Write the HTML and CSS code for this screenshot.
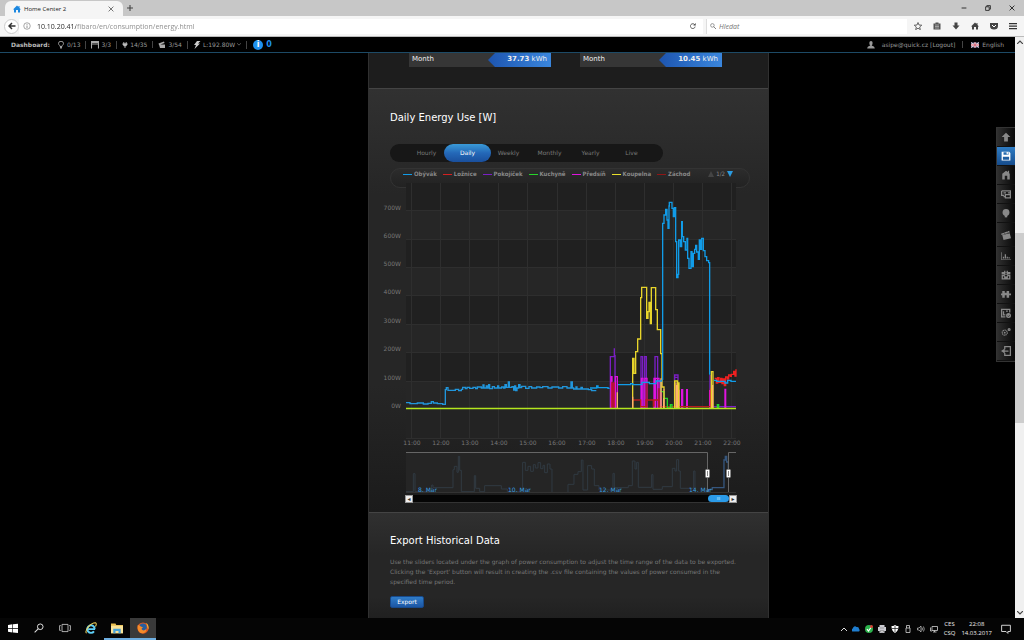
FILE: index.html
```
<!DOCTYPE html>
<html lang="en">

<head>
    <meta charset="UTF-8">
    <meta name="viewport" content="width=device-width, initial-scale=1.0">
    <title>Home Center 2</title>
    <link rel="stylesheet" href="styles.css">
</head>

<body>
    <header class="browser">
        <div class="tab-strip">
            <div class="tab">
                <svg class="icon" viewBox="0 0 16 16"><path fill="#1b87e0" d="M8 1 0 9h2v6h4v-5h4v5h4V9h2l-3-3V2h-2v2z"/></svg>
                <span class="tab-title">Home Center 2</span>
                <button class="plain" aria-label="Close tab"><svg class="icon-s" viewBox="0 0 10 10"><path d="m1 1 8 8M9 1 1 9" stroke="#666" stroke-width="1.5"/></svg></button>
            </div>
            <button class="plain new-tab" aria-label="New tab"><svg class="icon-s" viewBox="0 0 10 10"><path d="M5 0v10M0 5h10" stroke="#444" stroke-width="1.8"/></svg></button>
            <div class="window-buttons">
                <button class="plain" aria-label="Minimize"><svg class="icon-s" viewBox="0 0 10 10"><path d="M1 5h8" stroke="#222" stroke-width="1.5"/></svg></button>
                <button class="plain" aria-label="Restore"><svg class="icon-s" viewBox="0 0 10 10"><path d="M1 3h6v6H1zM3 3V1h6v6H7" fill="none" stroke="#222" stroke-width="1.4"/></svg></button>
                <button class="plain" aria-label="Close"><svg class="icon-s" viewBox="0 0 10 10"><path d="m1 1 8 8M9 1 1 9" stroke="#222" stroke-width="1.5"/></svg></button>
            </div>
        </div>
        <div class="nav-bar">
            <button class="plain back" aria-label="Back"><svg class="icon" viewBox="0 0 16 16"><path d="M15 8H3m5-6L2 8l6 6" fill="none" stroke="#333" stroke-width="3"/></svg></button>
            <div class="address">
                <svg class="icon" viewBox="0 0 16 16"><circle cx="8" cy="8" r="6.5" fill="none" stroke="#777" stroke-width="1.3"/><path d="M8 7v5M8 4v1.6" stroke="#777" stroke-width="1.6"/></svg>
                <input class="url" type="text" aria-label="Address" value="10.10.20.41/fibaro/en/consumption/energy.html">
                <button class="plain reload" aria-label="Reload"><svg class="icon-s" viewBox="0 0 10 10"><path d="M8 3a4 4 0 1 0 .6 3" fill="none" stroke="#444" stroke-width="1.4"/><path d="M9.500 0v4h-4z" fill="#444"/></svg></button>
            </div>
            <div class="search">
                <svg class="icon-s" viewBox="0 0 10 10"><circle cx="4" cy="4" r="3" fill="none" stroke="#777" stroke-width="1.2"/><path d="m6 6 4 4" stroke="#777" stroke-width="1.5"/></svg>
                <input type="text" aria-label="Search" placeholder="Hledat">
            </div>
            <div class="nav-icons">
                <button class="plain" aria-label="Bookmark"><svg class="icon" viewBox="0 0 16 16"><path d="m8 1 2 5 5.500.4-4.200 3.600 1.400 5.300L8 12.400l-4.700 2.900L4.700 10 .5 6.400 6 6z" fill="none" stroke="#444" stroke-width="1.600"/></svg></button>
                <button class="plain" aria-label="Bookmarks list"><svg class="icon" viewBox="0 0 16 16"><path d="M5 3V1h6v2h4v12H1V3z" fill="#555"/><path d="M4 6h8M4 9h8M4 12h8" stroke="#eee"/></svg></button>
                <button class="plain" aria-label="Downloads"><svg class="icon" viewBox="0 0 16 16"><path d="M5 1h6v6h4l-7 8-7-8h4z" fill="#444"/></svg></button>
                <button class="plain" aria-label="Home"><svg class="icon" viewBox="0 0 16 16"><path fill="#444" d="M8 1 0 9h2v6h4v-5h4v5h4V9h2l-3-3V2h-2v2z"/></svg></button>
                <button class="plain" aria-label="Pocket"><svg class="icon" viewBox="0 0 16 16"><path d="M0 2h16v6a8 7 0 0 1-16 0z" fill="#444"/><path d="m4 6 4 4 4-4" fill="none" stroke="#fff" stroke-width="2"/></svg></button>
                <button class="plain" aria-label="Menu"><svg class="icon" viewBox="0 0 16 16"><path d="M0 3h16M0 8h16M0 13h16" stroke="#333" stroke-width="2.500"/></svg></button>
            </div>
        </div>
    </header>

    <div class="viewport">
        <div class="page">
            <div class="dashboard">
                <strong>Dashboard:</strong>
                <a class="stat" href="#lights"><svg class="icon" viewBox="0 0 16 16"><path d="M6 11c0-3-3-3-3-6a5 4.500 0 0 1 10 0c0 3-3 3-3 6zM6 13h4M7 15h2" fill="none" stroke="#aaa" stroke-width="1.800"/></svg>0/13</a>
                <a class="stat" href="#blinds"><svg class="icon" viewBox="0 0 16 16"><path d="M1 15V1h14v14M1 3h14M1 6h14" fill="none" stroke="#aaa" stroke-width="2.200"/></svg>3/3</a>
                <a class="stat" href="#plugs"><svg class="icon-s" viewBox="0 0 10 10"><path d="M3 0v3M7 0v3M5 6v4" stroke="#bbb" stroke-width="1.500"/><path d="M1 2h8v2L7 7H3L1 4z" fill="#bbb"/></svg>14/35</a>
                <a class="stat" href="#scenes"><svg class="icon" viewBox="0 0 16 16"><path d="m1 5 11-4 1 3-11 4zM2 7h12v7H4z" fill="#aaa"/></svg>3/54</a>
                <a class="stat" href="#power"><svg class="icon" viewBox="0 0 16 16"><path d="M8 0h7l-5 5h4L3 16l3-8H2z" fill="#ccc"/></svg>L:192.80W <svg class="caret-s" viewBox="0 0 6 4"><path d="m0 0 3 3 3-3" fill="none" stroke="#888"/></svg></a>
                <a class="info" href="#info"><span class="info-dot">i</span>0</a>
                <div class="account">
                    <svg class="icon" viewBox="0 0 16 16"><path d="M8 0c4 0 4 6 1.500 9 0 1 6 1 6 6H.5c0-5 6-5 6-6C4 6 4 0 8 0z" fill="#999"/></svg>
                    <span>asipe@quick.cz <a href="#logout">[Logout]</a></span>
                    <a class="lang" href="#lang"><svg class="flag" viewBox="0 0 16 10"><path d="M0 0h16v10H0z" fill="#6a6595"/><path d="m0 0 16 10M16 0 0 10" stroke="#ddd" stroke-width="2"/><path d="M8 0v10M0 5h16" stroke="#fff" stroke-width="4"/><path d="M8 0v10M0 5h16" stroke="#c9455a" stroke-width="2"/></svg>English</a>
                </div>
            </div>

            <div class="content">
                <main class="column">
                    <section class="totals">
                        <div class="total"><span>Month</span><span class="chip"><b>37.73</b> kWh</span></div>
                        <div class="total"><span>Month</span><span class="chip"><b>10.45</b> kWh</span></div>
                    </section>

                    <section class="energy">
                        <h2>Daily Energy Use [W]</h2>
                        <nav class="periods">
                            <a href="#hourly">Hourly</a>
                            <a class="active" href="#daily">Daily</a>
                            <a href="#weekly">Weekly</a>
                            <a href="#monthly">Monthly</a>
                            <a href="#yearly">Yearly</a>
                            <a href="#live">Live</a>
                        </nav>
                        <div class="legend">
                            <span class="key blue">Obývák</span>
                            <span class="key red">Ložnice</span>
                            <span class="key purple">Pokojíček</span>
                            <span class="key green">Kuchyně</span>
                            <span class="key magenta">Předsíň</span>
                            <span class="key yellow">Koupelna</span>
                            <span class="key darkred">Záchod</span>
                            <span class="pager">
                                <svg class="arrow" viewBox="0 0 6 6"><path d="M3 0 6 6H0z" fill="#444"/></svg>
                                1/2
                                <svg class="arrow" viewBox="0 0 6 6"><path d="M0 0h6L3 6z" fill="#2b9be0"/></svg>
                            </span>
                        </div>
                        <svg class="chart" viewBox="380 183 370 310">
                            <!-- plot bands -->
                            <path d="M406 183h330v256H406z" fill="#202020"/>
                            <path d="M406 210h330v29H406zM406 267h330v28H406zM406 324h330v28H406zM406 381h330v28H406z" fill="#262626"/>
                            <path d="M406 409h330v30H406z" fill="#232323"/>
                            <path class="grid" d="M406 210.500h330M406 239.500h330M406 267.500h330M406 295.500h330M406 324.500h330M406 352.500h330M406 381.500h330M406 438.500h330"/>
                            <path class="grid" d="M411.500 183v256M440.500 183v256M469.500 183v256M498.500 183v256M527.500 183v256M557.500 183v256M586.500 183v256M615.500 183v256M644.500 183v256M673.500 183v256M702.500 183v256M731.500 183v256"/>
                            <g class="axis" text-anchor="end">
                                <text x="401" y="210">700W</text>
                                <text x="401" y="238">600W</text>
                                <text x="401" y="266">500W</text>
                                <text x="401" y="294">400W</text>
                                <text x="401" y="323">300W</text>
                                <text x="401" y="351">200W</text>
                                <text x="401" y="380">100W</text>
                                <text x="401" y="408">0W</text>
                            </g>
                            <g class="axis" text-anchor="middle">
                                <text x="412" y="445">11:00</text>
                                <text x="441" y="445">12:00</text>
                                <text x="470" y="445">13:00</text>
                                <text x="499" y="445">14:00</text>
                                <text x="528" y="445">15:00</text>
                                <text x="557" y="445">16:00</text>
                                <text x="587" y="445">17:00</text>
                                <text x="616" y="445">18:00</text>
                                <text x="645" y="445">19:00</text>
                                <text x="674" y="445">20:00</text>
                                <text x="703" y="445">21:00</text>
                                <text x="732" y="445">22:00</text>
                            </g>
                            <!-- morning and afternoon load -->
                            <g class="series" transform="translate(380 280) scale(.3333)">
                                <path stroke="#2196dc" d="M78 368h12v3h22v-2h18v3h14v-2h10v-5h6v4h12v2h16v2h8v-44h3v-6h5v8h22v-3h10v4h8v-4h4v-6h8v4h5v-4h8v3h10v-3h8v4h5v-5h12v3h5v-9h3v9h7v-6h3v6h4v-10h3v12h8v-6h6v4h10v-6h3v6h9v-3h6v3h4v-10h4v8h6v-16h3v16h8v-2h5v10h3v-12h3v14h4v-8h5v-10h4v9h5v-4h12v6h10v-5h8v4h15v-3h10v2h8v-3h16v4h12v-3h20v3h12v-4h13v4h12v-18h4v18h4v3h7v-6h3v6h12v-5h4v5h18v2h10v3h14"/>
                            </g>
                            <!-- evening load -->
                            <g class="series" transform="translate(590 195) scale(.3333)">
                                <path stroke="#7a1fc4" d="M61 640V485h12v-25 22h2v158M153 640V485h5v155M164 640V485h5v155M195 640V485h8v155M212 640V555M254 556V540h10v16M254 547h10M360 640V540M370 635h68"/>
                                <path stroke="#df14df" d="M63 560v80V545h3v15M76 640v-95h6v95M154 640v-90h5v90M165 640v-90h6v90M192 640v-90h4v90V550h6v90V550h5v90V560h6v80M222 640v-58M268 640v-56M275 640v-56h3v56M290 640v-56h2v56M359 640v-55M405 640v-57h2v57"/>
                                <path stroke="#a01745" stroke-width="7" d="M170 565v73M207 580v58"/>
                                <path stroke="#d01038" stroke-width="5" d="M66 562v76M72 562v76M362 580v58"/>
                                <path stroke="#b81c1c" d="M128 640V615h24v20h16v-20h24v20M190 635V615h17v20h153"/>
                                <path stroke="#f02020" d="M374 550h5v14h4v-16h4v14h5v-12h4v16h4v-14h3v20h4v-26h5v6h4v-12h5v4h3v-6h7v-9h4v14h3v-20"/>
                                <path stroke="#26d52b" d="M213 560v30h9v20h10v29h9v-10h5v10M382 639v-10h4v10"/>
                                <path stroke="#e8d52b" d="M128 640V490h4v45h5v-65h6v-38h9V308h3V277h15v93h4v-20h3v-28h4v64h3V278h13v66h5v60h10v72h4v100h6v64M254 640v-82h9v82v-76h4v76M364 640V530h5v110"/>
                                <path stroke="#ffb46a" d="M82 640v-48M128 640v-35M258 640v-78M262 640v-70M213 640v-90M221 640v-30M368 640v-70"/>
                                <path stroke="#119ce8" d="M0 579h20v-6h4v5h30v2h5M84 569h38v-3h6v3h28v-7h22v4h20v-8h17v-4M218 555V85h4V60h5V43h4v32h3v25h3V33h1V22h8v18h4v25h3V38h4v102h3v108h4v-10h2V135h5v20h4V80h2v45h4v15h5v25h5v-35h2v60h4v30h6v-50h3v45h4v-40h4v-12h3v-12h3v20h5v22h3v-58h3v28h4v-33h5v37h5v18h5v12h6v6h3v336M372 556h8v3h25v5h8v-8h10v3h15"/>
                            </g>
                            <path d="M406 408.500h330" stroke="#b4e61e" stroke-width="1.500"/>
                            <!-- range navigator -->
                            <path d="M406 453h302v40H406z" fill="#252525"/>
                            <g class="series" transform="translate(380 435) scale(.3333)">
                                <path stroke="#303a42" stroke-width="3" d="M78 170h22v-54h5v54h50v-20h4v8h60v-54h4v-10h8v18h4V64h4v42h5v64h39v-48h4v38h12v10h15v-18h50v10h18v8h46V82h8v24h8v-12h8v15h8v-20h6v10h8v-16h8v18h7v-10h5v22h8v-26h8v15h6v72h48v-26h18v-30h12v-8h10V75h5v90h14V92h12v10h8v50h14v13h42v-50h4v43h42v-6h12V78h8v24h5v-20h5v75h40v-38h4v44h28v-8h30V100h8v8h5V74h6v34h5v52h40v-52h4v60"/>
                                <path stroke="#35567d" d="M985 168v-4h12v-6h35V75h4V64h4v17h5v45"/>
                            </g>
                            <path d="M406 452.500h301.500v40M728.500 492v-39.500h7.500" fill="none" stroke="#666"/>
                            <path d="M406 492.500h330" stroke="#333"/>
                            <g class="handle">
                                <rect x="705.500" y="469.500" width="4" height="8" rx="1"/>
                                <rect x="726.500" y="469.500" width="4" height="8" rx="1"/>
                                <path d="M707.500 471v5M728.500 471v5"/>
                            </g>
                            <g class="dates">
                                <text x="418" y="492">8. Mar</text>
                                <text x="508" y="492">10. Mar</text>
                                <text x="599" y="492">12. Mar</text>
                                <text x="689" y="492">14. Mar</text>
                            </g>
                        </svg>
                        <div class="range-bar">
                            <button class="step" aria-label="Scroll left">◂</button>
                            <div class="range-track"><button class="range-thumb" aria-label="Visible range">III</button></div>
                            <button class="step" aria-label="Scroll right">▸</button>
                        </div>
                    </section>

                    <section class="export">
                        <h2>Export Historical Data</h2>
                        <p>Use the sliders located under the graph of power consumption to adjust the time range of the data to be exported. Clicking the 'Export' button will result in creating the .csv file containing the values of power consumed in the specified time period.</p>
                        <button class="export-button">Export</button>
                    </section>
                </main>

                <nav class="side-menu">
                    <a href="#top" aria-label="Top"><svg class="icon-m" viewBox="0 0 16 16"><path d="M8 1 1 8h4v7h6V8h4z"/></svg></a>
                    <a class="active" href="#save" aria-label="Save"><svg class="icon-m" viewBox="0 0 16 16"><path fill-rule="evenodd" d="M1 1h12l2 2v12H1zm3 1v4h8V2zM3 9v5h10V9zM9 2h2v3H9z"/></svg></a>
                    <a href="#house" aria-label="House"><svg class="icon-m" viewBox="0 0 16 16"><path d="M8 1 2 6v9h4V9h4v6h4V6l-1-1V1h-2v2z"/></svg></a>
                    <a href="#rooms" aria-label="Rooms"><svg class="icon-m" viewBox="0 0 16 16"><path class="line" d="M1 3h14v6M1 3v7h4M4 6h4M11 6h4M7 9h8v5H7zM7 12H4"/></svg></a>
                    <a href="#devices" aria-label="Devices"><svg class="icon-m" viewBox="0 0 16 16"><circle cx="8" cy="7" r="5.500"/><path d="M6 11h4v4H6z"/></svg></a>
                    <a class="tall" href="#scene-list" aria-label="Scenes"><svg class="icon-m" viewBox="0 0 16 16"><path d="m0 6 13-5 1 3L1 8zM2 8l12-3 2 8-12 3z"/><path d="m4 4 3 2M9 2l3 2" stroke="#222"/></svg></a>
                    <a href="#consumption" aria-label="Consumption"><svg class="icon-m" viewBox="0 0 16 16"><path d="M0 2h1v11h15v1H0zM3 9h2v3H3zM6 5h2v7H6zM9 9h2v3H9zM12 10h2v2h-2z"/></svg></a>
                    <a href="#backup" aria-label="Backup"><svg class="icon-m" viewBox="0 0 16 16"><path fill-rule="evenodd" d="M1 3h4V1h2v2h2V1h2v2h4v4H1zM1 8h14v7H1zm6-4v3H5l3 4 3-4H9V4zM3 10v3h2v-3zM11 10v3h2v-3z"/></svg></a>
                    <a href="#plugins" aria-label="Plugins"><svg class="icon-m" viewBox="0 0 16 16"><path d="M0 7h2V3h4v3h3V3h4v4h3v3h-3v4H9v-4H6v4H2v-4H0z"/></svg></a>
                    <a href="#panels" aria-label="Panels"><svg class="icon-m" viewBox="0 0 16 16"><path class="line" d="M7 14H1V2h13v5M4 5v6h3M8 5h3"/><circle cx="12" cy="12" r="4"/><path d="m10 12 2 2 2-3" stroke="#222" fill="none"/></svg></a>
                    <a href="#config" aria-label="Configuration"><svg class="icon-m" viewBox="0 0 16 16"><circle class="line" cx="6" cy="9" r="4" stroke-dasharray="2 1"/><circle cx="6" cy="9" r="1.500"/><circle class="line" cx="13" cy="4" r="1.500"/></svg></a>
                    <a href="#exit" aria-label="Exit"><svg class="icon-m" viewBox="0 0 16 16"><path class="line" d="M6 5V1h9v14H6v-4"/><path d="M6 4v3h6v2H6v3L0 8z"/></svg></a>
                </nav>
            </div>
        </div>
        <div class="scrollbar">
            <svg class="caret" viewBox="0 0 6 4"><path d="m0 4 3-3 3 3" fill="none" stroke="#444" stroke-width="1.200"/></svg>
            <div class="scroll-thumb"></div>
            <svg class="caret" viewBox="0 0 6 4"><path d="m0 0 3 3 3-3" fill="none" stroke="#444" stroke-width="1.200"/></svg>
        </div>
    </div>

    <footer class="taskbar">
        <button class="plain task" aria-label="Start"><svg class="icon-m" viewBox="0 0 16 16"><path fill="#fff" d="m0 3 7-1v6H0zM8 2l8-1v7H8zM0 9h7v6l-7-1zM8 9h8v7l-8-1z"/></svg></button>
        <button class="plain task" aria-label="Search"><svg class="icon-m" viewBox="0 0 16 16"><circle cx="10" cy="6" r="4.500" fill="none" stroke="#ddd" stroke-width="1.600"/><path d="m7 9-6 6" stroke="#ddd" stroke-width="1.800"/></svg></button>
        <button class="plain task" aria-label="Task view"><svg class="icon-l" viewBox="0 0 20 16"><path d="M5 2h10v12H5zM3 4H1v8h2M17 4h2v8h-2" fill="none" stroke="#ccc" stroke-width="1.400"/></svg></button>
        <button class="plain task" aria-label="Internet Explorer"><svg class="icon-l" viewBox="0 0 16 16"><path d="M13.500 9.500H4.500M13 9a5 5 0 1 0-1 3.500" fill="none" stroke="#5fd0f7" stroke-width="2.600"/><path d="M2 15C-1 12 7 1 14 1c2 1 1 3 0 5" fill="none" stroke="#f2d35c" stroke-width="1.400"/></svg></button>
        <button class="plain task open" aria-label="Explorer"><svg class="icon-l" viewBox="0 0 16 16"><path fill="#e8bd4e" d="M0 2h6l1 2h9v11H0z"/><path fill="#fae399" d="M0 5h16v10H0z"/><path fill="#47a2d9" d="M3 9h10v6h-3v-3H6v3H3z"/></svg></button>
        <button class="plain task open current" aria-label="Firefox"><svg class="icon-l" viewBox="0 0 16 16"><circle cx="8" cy="8" r="7.500" fill="#e2581e"/><circle cx="8" cy="7" r="5" fill="#285d9f"/><path d="M1 4c2 0 3 1 4 2l3 1-2 2c1 3 5 3 6 0 1 3-1 6-5 6S0 11 1 4z" fill="#f58b28"/><path d="M12 1c3 2 4 6 3 9-1-2-1-5-3-9z" fill="#f8bd36"/></svg></button>
        <div class="tray">
            <svg class="caret" viewBox="0 0 6 4"><path d="m0 4 3-3 3 3" fill="none" stroke="#ddd"/></svg>
            <svg class="icon" viewBox="0 0 16 16"><path d="M2 13a3 3 0 0 1 0-6 4 4 0 0 1 7-3 4 4 0 0 1 5 4 3 3 0 0 1 0 5z" fill="#1f7ed0"/></svg>
            <svg class="icon" viewBox="0 0 16 16"><circle cx="8" cy="8" r="8" fill="#2cb34c"/><path d="m4 8 3 4 5-7" fill="none" stroke="#fff" stroke-width="2.500"/><circle cx="13" cy="3" r="3" fill="#d94034"/></svg>
            <svg class="icon" viewBox="0 0 16 16"><path d="M3 0h10v4h3v8h-3v4H3v-4H0V4h3z" fill="#c9c9d0"/><path d="M4 6h8M5 11h6v3H5z" stroke="#666" fill="#eee"/></svg>
            <svg class="icon" viewBox="0 0 16 16"><path d="M8 0c2 2 5 2 7 2 0 7-2 11-7 14C3 13 1 9 1 2c2 0 5 0 7-2z" fill="#fff"/><path d="M8 2v12M2 7h12" stroke="#222" stroke-width="1.500"/></svg>
            <svg class="icon" viewBox="0 0 16 16"><path d="M5 6V1h6v5M4 6h8v9H4z" fill="none" stroke="#ddd" stroke-width="1.500"/></svg>
            <svg class="icon" viewBox="0 0 16 16"><path d="M1 6h3l4-4v12l-4-4H1zM10 5q2 3 0 6M13 3q3 5 0 10" fill="none" stroke="#ccc" stroke-width="1.400"/></svg>
            <svg class="icon" viewBox="0 0 16 16"><path d="M4 3h11v8H4zM1 5v7h3M9 11v3M6 14h7" fill="none" stroke="#ddd" stroke-width="1.500"/></svg>
            <div class="tray-text">CES<br>CSQ</div>
            <div class="tray-text clock">22:08<br>14.03.2017</div>
            <svg class="icon-m" viewBox="0 0 16 16"><path d="M1 2h14v10h-4v3l-3-3H1z" fill="none" stroke="#ddd" stroke-width="1.500"/></svg>
        </div>
    </footer>
</body>

</html>
```
FILE: styles.css
```
* {
    box-sizing: border-box;
}

body {
    margin: 0;
    height: 100vh;
    display: flex;
    flex-direction: column;
    background-color: #000;
    font-family: "DejaVu Sans", sans-serif;
    font-size: 6px;
    overflow: hidden;
}

svg {
    display: block;
    flex-shrink: 0;
}

a {
    color: inherit;
    text-decoration: none;
}

input {
    min-width: 0;
    padding: 0;
    border: none;
    outline: none;
    background: none;
    font: inherit;
}

button {
    font: inherit;
    cursor: pointer;
}

.plain {
    display: flex;
    justify-content: center;
    align-items: center;
    padding: 0;
    border: none;
    background: none;
}

.icon {
    width: 8px;
    height: 8px;
}

.icon-s {
    width: 6px;
    height: 6px;
}

.icon-m {
    width: 10px;
    height: 10px;
}

.icon-l {
    width: 12px;
    height: 12px;
}

.caret {
    width: 6px;
    height: 4px;
}

.caret-s {
    width: 4px;
    height: 3px;
}

/* browser window */
.browser {
    font-family: "Open Sans", sans-serif;
    font-size: 7px;
    color: #222;
}

.tab-strip {
    display: flex;
    align-items: center;
    height: 16px;
    padding-left: 5px;
    background-color: #c7c7c7;
}

.tab {
    display: flex;
    align-items: center;
    gap: 3px;
    width: 118px;
    height: 15px;
    align-self: flex-end;
    padding: 0 9px 0 8px;
    background-color: #f5f5f5;
    border-radius: 6px 6px 0 0;
}

.tab-title {
    flex: 1;
    font-size: 6px;
}

.new-tab {
    margin-left: 4px;
}

.window-buttons {
    display: flex;
    gap: 18px;
    margin-left: auto;
    padding-right: 9px;
}

.nav-bar {
    display: flex;
    align-items: center;
    height: 21px;
    padding: 0 7px 0 4px;
    background-color: #f5f5f5;
    border-bottom: 1px solid #bbb;
}

.back {
    width: 15px;
    height: 15px;
    border: 1px solid #ccc;
    border-radius: 50%;
    background-color: #fff;
}

.address {
    display: flex;
    align-items: center;
    flex: 1;
    height: 15px;
    gap: 6px;
    padding: 0 7px 0 4px;
    background-color: #fff;
}

.url {
    flex: 1;
    background: linear-gradient(to right, #222 39px, #888 39px);
    background-clip: text;
    -webkit-background-clip: text;
    -webkit-text-fill-color: transparent;
}

.reload {
    padding-left: 6px;
}

.search {
    display: flex;
    align-items: center;
    gap: 3px;
    width: 201px;
    height: 15px;
    margin-left: 3px;
    padding-left: 3px;
    background-color: #fff;
    border-left: 1px solid #ddd;
}

.search input::placeholder {
    color: #777;
    font-style: italic;
}

.nav-icons {
    display: flex;
    gap: 11px;
    padding-left: 7px;
}

.viewport {
    display: flex;
    flex: 1;
    min-height: 0;
}

.page {
    flex: 1;
    display: flex;
    flex-direction: column;
    min-width: 0;
}

.scrollbar {
    display: flex;
    flex-direction: column;
    justify-content: space-between;
    align-items: center;
    width: 9px;
    padding: 3px 0;
    background-color: #f0f0f0;
}

.scroll-thumb {
    width: 100%;
    height: 190px;
    background-color: #cdcdcd;
}

/* dashboard */
.dashboard {
    display: flex;
    align-items: center;
    height: 16px;
    flex-shrink: 0;
    padding: 0 11px;
    color: #999;
    border-bottom: 1px solid #1d4a66;
}

.dashboard strong {
    margin-right: 7px;
    color: #bbb;
}

.stat {
    display: flex;
    align-items: center;
    gap: 2px;
    margin-right: 5px;
    padding-right: 5px;
    border-right: 1px solid #444;
}

.info {
    display: flex;
    align-items: center;
    gap: 3px;
    margin-left: 1px;
    color: #1e90f0;
    font-size: 8px;
    font-weight: bold;
}

.info-dot {
    width: 10px;
    height: 10px;
    border-radius: 50%;
    background-color: #1e90f0;
    color: #fff;
    line-height: 10px;
    text-align: center;
}

.account {
    display: flex;
    align-items: center;
    gap: 7px;
    margin-left: auto;
}

.lang {
    display: flex;
    align-items: center;
    gap: 3px;
    padding-left: 8px;
    border-left: 1px solid #444;
}

.flag {
    width: 8px;
    height: 6px;
}

/* page content */
.content {
    display: flex;
    justify-content: center;
    align-items: flex-start;
    flex: 1;
    min-height: 0;
    position: relative;
}

.column {
    width: 401px;
    margin-left: 122px;
    height: 100%;
    display: flex;
    flex-direction: column;
    border: solid #303030;
    border-width: 0 1px;
    background-color: #222;
}

.totals {
    display: flex;
    gap: 29px;
    padding: 0 46px 21px 40px;
    background-color: #1d1d1d;
}

.total {
    display: flex;
    flex: 1;
    justify-content: space-between;
    height: 14px;
    padding-left: 3px;
    background-color: #363636;
    color: #eee;
    font-size: 7px;
    line-height: 13px;
}

.chip {
    width: 63px;
    padding-right: 4px;
    text-align: right;
    background: linear-gradient(to right, #1d55b0, #3a86dd);
    clip-path: polygon(0 50%, 7px 0, 100% 0, 100% 100%, 7px 100%);
}

h2 {
    margin: 0 0 0 10px;
    font-size: 10px;
    font-weight: normal;
    line-height: 12px;
    color: #fff;
}

.energy {
    padding: 23px 18px 9px 11px;
    border-top: 1px solid #444;
    background: linear-gradient(#313131, #262626 25%, #262626 70%, #1b1b1b);
}

.periods {
    display: grid;
    grid-template-columns: repeat(6, 1fr);
    width: 273px;
    height: 18px;
    margin: 20px 0 6px 10px;
    padding: 0 11px 0 16px;
    border-radius: 9px;
    background-color: #171717;
    color: #777;
    line-height: 18px;
    text-align: center;
}

.periods .active {
    margin: 0 -3px;
    border-radius: 9px;
    background: linear-gradient(#3a9bd8, #2468b8 50%, #1a4f9c);
    color: #fff;
}

.legend {
    display: flex;
    gap: 6px;
    height: 20px;
    margin-left: 10px;
    padding: 0 16px 0 12px;
    border: 1px solid #333;
    border-radius: 10px;
    background: linear-gradient(#2c2c2c, #222);
    color: #888;
    font-family: "DejaVu Sans Condensed", "DejaVu Sans", sans-serif;
    font-weight: bold;
    line-height: 10px;
    white-space: nowrap;
}

.key {
    display: flex;
    align-items: center;
    gap: 2px;
    height: 10px;
}

.key::before {
    content: "";
    width: 9px;
    height: 1px;
    background-color: currentColor;
}

.blue::before {
    background-color: #119ce8;
}

.red::before {
    background-color: #d42020;
}

.purple::before {
    background-color: #7a1fc4;
}

.green::before {
    background-color: #26d52b;
}

.magenta::before {
    background-color: #df14df;
}

.yellow::before {
    background-color: #e8e02b;
}

.darkred::before {
    background-color: #8f1616;
}

.pager {
    display: flex;
    align-items: center;
    gap: 2px;
    height: 10px;
    margin-left: auto;
    font-weight: normal;
}

.arrow {
    width: 6px;
    height: 6px;
}

.chart {
    position: relative;
    width: 100%;
    margin-top: -5px;
    font-size: 6px;
}

.grid {
    fill: none;
    stroke: #2e2e2e;
}

.axis {
    fill: #777;
}

.series {
    fill: none;
    stroke-width: 4;
}

.dates {
    fill: #3a9fe0;
}

.handle {
    fill: #fff;
    stroke: #888;
}

.range-bar {
    display: flex;
    height: 8px;
    margin: 2px 13px 0 25px;
}

.step {
    width: 8px;
    padding: 0;
    border: 1px solid #999;
    background-color: #eee;
    color: #333;
    line-height: 6px;
}

.range-track {
    display: flex;
    justify-content: flex-end;
    flex: 1;
    background-color: #050505;
    border-bottom: 1px solid #333;
}

.range-thumb {
    width: 21px;
    padding: 0;
    border: none;
    border-radius: 4px;
    background-color: #2b9be8;
    color: #d5edff;
    font-size: 4px;
    line-height: 6px;
}

.export {
    flex: 1;
    padding: 22px 18px 0 11px;
    border-top: 1px solid #444;
    background: linear-gradient(#303030, #262626 40%, #262626 80%, #202020);
}

.export p {
    margin: 10px 8px 9px 10px;
    color: #777;
    line-height: 10px;
}

.export-button {
    display: block;
    width: 34px;
    height: 12px;
    margin-left: 10px;
    padding: 0;
    border: 1px solid #174a8c;
    border-radius: 2px;
    background: linear-gradient(#2f7cc8, #1c56a4);
    color: #fff;
    line-height: 10px;
}

.side-menu {
    position: absolute;
    top: 74px;
    right: 0;
    width: 19px;
    border: 1px solid #333;
    border-right: none;
    background: linear-gradient(to right, #303030, #080808);
}

.side-menu a {
    display: flex;
    justify-content: center;
    align-items: center;
    height: 19px;
    border-bottom: 1px solid #111;
}

.side-menu .tall {
    height: 24px;
}

.side-menu svg {
    fill: #888;
}

.side-menu .line {
    fill: none;
    stroke: #888;
    stroke-width: 2;
}

.side-menu .active {
    background: linear-gradient(#2e7cc4, #164c8c);
}

.side-menu .active svg {
    fill: #fff;
}

/* taskbar */
.taskbar {
    display: flex;
    height: 22px;
    flex-shrink: 0;
    background-color: #050505;
    color: #eee;
    font-family: "Open Sans", sans-serif;
}

.task {
    width: 26px;
    border-bottom: 2px solid transparent;
}

.task.open {
    border-color: #6eaee0;
}

.task.current {
    background-color: #3a3a3a;
}

.tray {
    display: flex;
    align-items: center;
    gap: 5px;
    margin-left: auto;
    padding-right: 13px;
}

.tray-text {
    margin-left: 1px;
    line-height: 9px;
    text-align: center;
}

.clock {
    margin-right: 4px;
}
```
